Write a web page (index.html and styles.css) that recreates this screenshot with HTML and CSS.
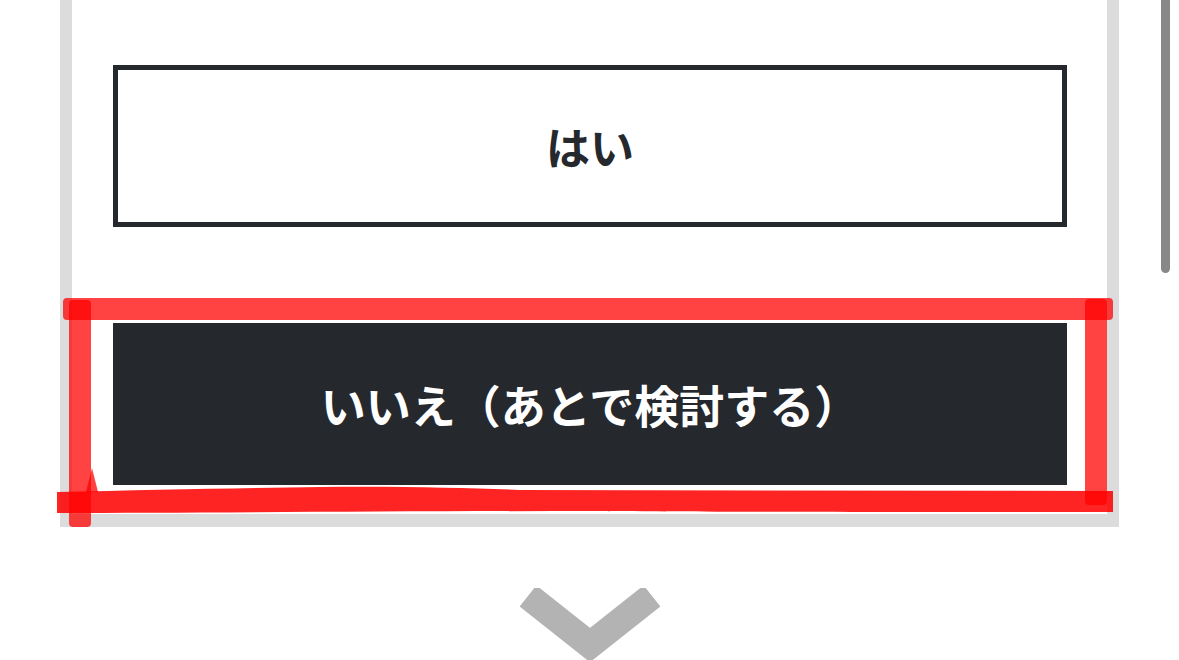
FILE: index.html
```html
<!DOCTYPE html>
<html lang="ja">
<head>
<meta charset="utf-8">
<title>確認</title>
<link rel="stylesheet" href="styles.css">
</head>
<body>
<div class="page">
  <section class="panel">
    <button class="choice choice-yes">はい</button>
    <button class="choice choice-no">いいえ（あとで検討する）</button>
  </section>
  <div class="next">
    <svg class="chevron" width="160" height="80" viewBox="0 0 160 80" aria-hidden="true">
      <polyline points="18,8 80,57 142,8" fill="none" stroke="#b3b3b3" stroke-width="27" stroke-linejoin="miter" stroke-linecap="butt"/>
    </svg>
  </div>
</div>
<div class="scrollbar"></div>
<svg class="annotation" width="1179" height="660" viewBox="0 0 1179 660" aria-hidden="true">
  <g fill="#ff0000" fill-opacity="0.74">
    <rect x="63" y="298" width="1050" height="22" rx="4"/>
    <rect x="69" y="300" width="22" height="227" rx="4"/>
    <rect x="1085" y="299" width="22" height="206" rx="4"/>
    <path d="M86,492 L92,468 L98,492 Z"/>
  </g>
  <path fill="#ff0000" fill-opacity="0.86" d="M57,492 C150,490 250,488 320,487 C400,486 470,488 520,490 L1113,491 L1113,512 C900,512 700,512 600,511 C400,511 200,513 57,513 Z"/>
</svg>
</body>
</html>
```
FILE: styles.css
```css
html, body {
  margin: 0;
  padding: 0;
  background: #ffffff;
}

body {
  width: 1179px;
  height: 660px;
  overflow: hidden;
  position: relative;
  font-family: "Noto Sans CJK JP", "Noto Sans", sans-serif;
}

.page {
  display: flex;
  flex-direction: column;
  width: 1059px;
  margin-left: 60px;
}

.panel {
  display: flex;
  flex-direction: column;
  gap: 96px;
  padding: 65px 40px 29px 41px;
  border: 12px solid #dcdcdc;
  border-top: 0;
  border-bottom-width: 13px;
  background: #ffffff;
}

.choice {
  height: 162px;
  margin: 0;
  font-family: "Noto Sans CJK JP", "Noto Sans", sans-serif;
  font-size: 44px;
  font-weight: 700;
  line-height: 1;
  letter-spacing: 0;
  cursor: pointer;
  display: flex;
  align-items: center;
  justify-content: center;
}

.choice-yes {
  background: #ffffff;
  color: #25282d;
  border: 5px solid #25282d;
}

.choice-no {
  background: #25282d;
  color: #ffffff;
  border: 0;
  font-size: 45px;
}

.next {
  display: flex;
  justify-content: center;
  padding-top: 61px;
}

.chevron {
  display: block;
}

.scrollbar {
  position: absolute;
  top: -10px;
  left: 1161px;
  width: 9px;
  height: 283px;
  border-radius: 5px;
  background: #888888;
}

.annotation {
  position: absolute;
  top: 0;
  left: 0;
  pointer-events: none;
}
```
